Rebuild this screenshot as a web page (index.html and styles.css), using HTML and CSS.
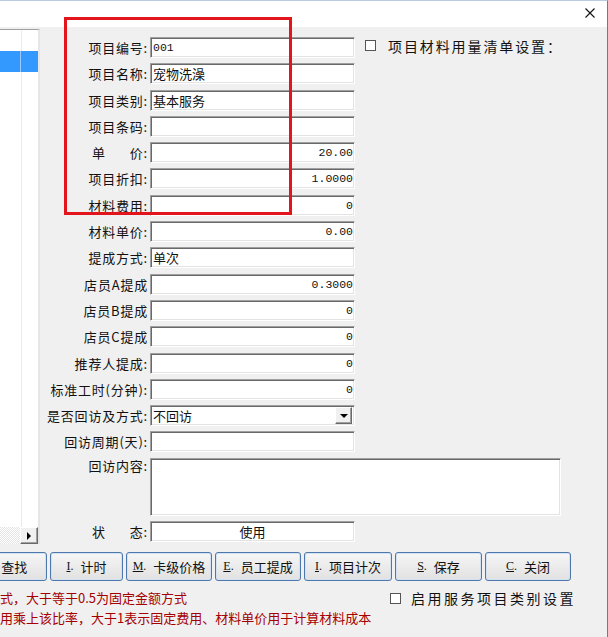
FILE: index.html
```html
<!DOCTYPE html>
<html lang="zh-CN">
<head>
    <meta charset="UTF-8">
    <title>服务项目设置</title>
    <link rel="stylesheet" href="styles.css">
</head>
<body>
<div class="window">
    <div class="titlebar">
        <span class="close">
            <svg width="10" height="10" viewBox="0 0 10 10"><path d="M0.5 0.5 L9.5 9.5 M9.5 0.5 L0.5 9.5" stroke="#111" stroke-width="1.1" fill="none"/></svg>
        </span>
    </div>

    <div class="main">
        <!-- item list on the left, mostly scrolled out of view -->
        <div class="list">
            <div class="list-body">
                <div class="list-row"></div>
                <div class="list-row selected"><span class="cell first"></span><span class="cell"></span></div>
            </div>
            <div class="hscroll">
                <span class="track"></span>
                <span class="arrow"></span>
            </div>
        </div>

        <div class="form">
            <div class="row">
                <span class="label">项目编号:</span>
                <span class="field mono">001</span>
                <span class="check top-check"><span class="box"></span>项目材料用量清单设置：</span>
            </div>
            <div class="row"><span class="label">项目名称:</span><span class="field">宠物洗澡</span></div>
            <div class="row"><span class="label">项目类别:</span><span class="field">基本服务</span></div>
            <div class="row"><span class="label">项目条码:</span><span class="field"></span></div>
            <div class="row"><span class="label">单<span class="sp"></span>价:</span><span class="field num">20.00</span></div>
            <div class="row"><span class="label">项目折扣:</span><span class="field num">1.0000</span></div>
            <div class="row"><span class="label">材料费用:</span><span class="field num">0</span></div>
            <div class="row"><span class="label">材料单价:</span><span class="field num">0.00</span></div>
            <div class="row"><span class="label">提成方式:</span><span class="field">单次</span></div>
            <div class="row"><span class="label">店员A提成</span><span class="field num">0.3000</span></div>
            <div class="row"><span class="label">店员B提成</span><span class="field num">0</span></div>
            <div class="row"><span class="label">店员C提成</span><span class="field num">0</span></div>
            <div class="row"><span class="label">推荐人提成:</span><span class="field num">0</span></div>
            <div class="row"><span class="label">标准工时(分钟):</span><span class="field num">0</span></div>
            <div class="row">
                <span class="label">是否回访及方式:</span>
                <span class="field combo">不回访<span class="drop"></span></span>
            </div>
            <div class="row"><span class="label">回访周期(天):</span><span class="field"></span></div>
            <div class="row tall"><span class="label">回访内容:</span><span class="field memo"></span></div>
            <div class="row"><span class="label">状<span class="sp"></span>态:</span><span class="field center">使用</span></div>
        </div>
    </div>

    <div class="buttons">
        <button class="btn find"><span class="key"><u>F</u>.</span>查找</button>
        <button class="btn timer"><span class="key"><u>I</u>.</span>计时</button>
        <button class="btn"><span class="key"><u>M</u>.</span>卡级价格</button>
        <button class="btn"><span class="key"><u>E</u>.</span>员工提成</button>
        <button class="btn wide"><span class="key"><u>I</u>.</span>项目计次</button>
        <button class="btn save"><span class="key"><u>S</u>.</span>保存</button>
        <button class="btn"><span class="key"><u>C</u>.</span>关闭</button>
    </div>

    <div class="footer">
        <div class="notes">
            <div>式，大于等于0.5为固定金额方式</div>
            <div>用乘上该比率，大于1表示固定费用、材料单价用于计算材料成本</div>
        </div>
        <span class="check bottom-check"><span class="box"></span>启用服务项目类别设置</span>
    </div>

    <div class="mark"></div>
</div>
</body>
</html>
```

FILE: styles.css
```css
* {
    box-sizing: border-box;
}
body {
    margin: 0;
    font-family: "Noto Sans CJK SC", sans-serif;
    font-size: 13px;
    color: #111;
}
.window {
    position: relative;
    width: 608px;
    height: 637px;
    overflow: hidden;
    background: #f0f0f0;
    border-top: 1px solid #b9cde2;
    border-right: 1px solid #3b86d6;
}
.titlebar {
    height: 26px;
    background: #fff;
    display: flex;
    justify-content: flex-end;
    align-items: flex-start;
    padding: 7px 12px 0 0;
}
.close {
    display: block;
    width: 10px;
    height: 10px;
}
.close svg {
    display: block;
}

.main {
    display: flex;
    align-items: flex-start;
}

/* list */
.list {
    width: 40px;
    height: 515px;
    margin-top: 2px;
    border-top: 1px solid #a0a0a0;
    border-right: 2px solid #e6e6e6;
    display: flex;
    flex-direction: column;
}
.list-body {
    flex: 1;
    background: linear-gradient(to right, transparent 21px, #ebebeb 21px, #ebebeb 22px, transparent 22px), #fff;
}
.list-row {
    height: 21px;
}
.list-row.selected {
    display: flex;
    background: #3399ff;
}
.cell.first {
    width: 21px;
    border-right: 1px solid #9ccaff;
}
.hscroll {
    height: 17px;
    display: flex;
    background: #fff;
}
.track {
    flex: 1;
    background: repeating-conic-gradient(#fff 0 25%, #e4e4e4 0 50%) 0 0 / 2px 2px;
}
.arrow {
    width: 18px;
    height: 17px;
    background: #f0f0f0;
    border: 1px solid;
    border-color: #fff #696969 #696969 #fff;
    box-shadow: inset -1px -1px 0 #a0a0a0;
    display: flex;
    align-items: center;
    justify-content: center;
}
.arrow::after {
    content: "";
    border-left: 4px solid #000;
    border-top: 4px solid transparent;
    border-bottom: 4px solid transparent;
}

/* form */
.form {
    display: flex;
    flex-direction: column;
    gap: 5.3px;
    padding-top: 10px;
}
.row {
    display: flex;
    align-items: center;
    height: 21px;
}
.row.tall {
    height: 58px;
    align-items: flex-start;
}
.label {
    width: 110px;
    padding-right: 2px;
    text-align: right;
    white-space: nowrap;
    line-height: 21px;
    letter-spacing: 0.8px;
}
.row.tall .label {
    line-height: 16px;
}
.sp {
    display: inline-block;
    width: 24px;
}
.field {
    width: 205px;
    height: 21px;
    background: #fff;
    border: 1px solid;
    border-color: #a0a0a0 #fff #fff #a0a0a0;
    box-shadow: inset 1px 1px 0 #696969, inset -1px -1px 0 #e3e3e3;
    padding: 0 2px;
    line-height: 19px;
    white-space: nowrap;
    overflow: hidden;
}
.field.num,
.field.mono {
    font-family: "Liberation Mono", monospace;
    font-size: 11.5px;
}
.field.num {
    text-align: right;
    padding-right: 1px;
}
.field.center {
    text-align: center;
}
.field.memo {
    width: 411px;
    height: 58px;
}
.field.combo {
    display: flex;
    justify-content: space-between;
    align-items: center;
    padding-right: 2px;
}
.drop {
    width: 17px;
    height: 17px;
    background: #f0f0f0;
    border: 1px solid;
    border-color: #fff #696969 #696969 #fff;
    box-shadow: inset -1px -1px 0 #a0a0a0;
    display: flex;
    align-items: center;
    justify-content: center;
}
.drop::after {
    content: "";
    border-top: 4px solid #000;
    border-left: 4px solid transparent;
    border-right: 4px solid transparent;
    margin-top: 1px;
}

/* checkboxes */
.check {
    display: flex;
    align-items: center;
    white-space: nowrap;
    font-size: 14px;
    color: #111;
}
.box {
    width: 11px;
    height: 11px;
    background: #fff;
    border: 1px solid #555;
}
.top-check {
    align-self: flex-start;
    height: 17px;
    margin-left: 10px;
    gap: 12px;
    letter-spacing: 1.9px;
}
.bottom-check {
    height: 20px;
    gap: 10px;
    letter-spacing: 2.5px;
}

/* buttons */
.buttons {
    display: flex;
    gap: 3px;
    margin: 8px 0 0 -34px;
}
.btn {
    width: 86px;
    height: 29px;
    padding: 0;
    border: 1px solid #4d78ad;
    border-radius: 3px;
    background: linear-gradient(#f6f6f6, #e1e1e1);
    box-shadow: inset 0 0 0 1px #d3e1f1;
    font-family: "Noto Sans CJK SC", sans-serif;
    font-size: 13px;
    color: #111;
    display: flex;
    align-items: center;
    justify-content: center;
}
.btn.find {
    width: 81px;
}
.btn.timer {
    width: 73px;
}
.btn.wide {
    width: 88px;
}
.btn.save {
    width: 87px;
}
.key {
    font-family: "Liberation Serif", serif;
    font-size: 12px;
    margin-right: 7px;
}

/* footer */
.footer {
    display: flex;
    align-items: flex-start;
    margin-top: 7px;
}
.notes {
    width: 390px;
    color: #a40000;
    line-height: 20px;
    white-space: nowrap;
}

/* red highlight frame drawn over the first fields */
.mark {
    position: absolute;
    left: 64px;
    top: 16px;
    width: 228px;
    height: 198px;
    border: 3px solid #e2141c;
}
```
